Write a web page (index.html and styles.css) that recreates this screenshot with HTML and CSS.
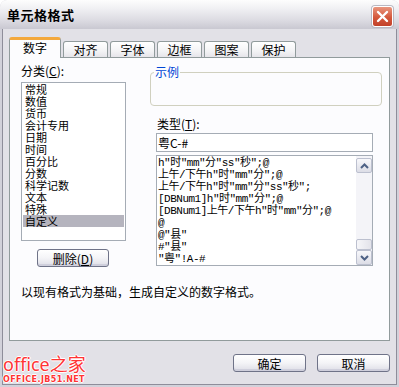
FILE: index.html
```html
<!DOCTYPE html>
<html lang="zh-CN">
<head>
  <meta charset="UTF-8" />
  <title>单元格格式</title>
  <link rel="stylesheet" href="styles.css">
</head>
<body>
  <div class="window">
    <div class="titlebar">
      <span class="title">单元格格式</span>
      <button class="close" title="关闭">
        <svg width="13" height="13" viewBox="0 0 13 13">
          <path d="M2 2 L11 11 M11 2 L2 11" stroke="#fff" stroke-width="2.4" stroke-linecap="round" fill="none"/>
        </svg>
      </button>
    </div>

    <div class="dialog">
      <div class="tabs">
        <div class="tab active">数字</div>
        <div class="tab">对齐</div>
        <div class="tab">字体</div>
        <div class="tab">边框</div>
        <div class="tab">图案</div>
        <div class="tab">保护</div>
      </div>

      <div class="panel">
        <div class="cols">
          <div class="left">
            <div class="label">分类(<u>C</u>):</div>
            <ul class="list">
              <li>常规</li>
              <li>数值</li>
              <li>货币</li>
              <li>会计专用</li>
              <li>日期</li>
              <li>时间</li>
              <li>百分比</li>
              <li>分数</li>
              <li>科学记数</li>
              <li>文本</li>
              <li>特殊</li>
              <li class="selected">自定义</li>
            </ul>
            <button class="btn del">删除(<u>D</u>)</button>
          </div>

          <div class="right">
            <fieldset class="sample">
              <legend>示例</legend>
            </fieldset>
            <div class="field">
              <div class="label">类型(<u>T</u>):</div>
              <div class="input">粤C-#</div>
              <div class="formats">
                <ul class="format-list">
                  <li>h"时"mm"分"ss"秒";@</li>
                  <li>上午/下午h"时"mm"分";@</li>
                  <li>上午/下午h"时"mm"分"ss"秒";</li>
                  <li>[DBNum1]h"时"mm"分";@</li>
                  <li>[DBNum1]上午/下午h"时"mm"分";@</li>
                  <li>@</li>
                  <li>@"县"</li>
                  <li>#"县"</li>
                  <li>"粤"!A-#</li>
                </ul>
                <div class="scrollbar">
                  <div class="arrow">
                    <svg width="9" height="6" viewBox="0 0 9 6"><path d="M1 5 L4.5 1.5 L8 5" stroke="#4d6185" stroke-width="2" fill="none"/></svg>
                  </div>
                  <div class="track"><div class="thumb"></div></div>
                  <div class="arrow">
                    <svg width="9" height="6" viewBox="0 0 9 6"><path d="M1 1 L4.5 4.5 L8 1" stroke="#4d6185" stroke-width="2" fill="none"/></svg>
                  </div>
                </div>
              </div>
            </div>
          </div>
        </div>
        <p class="hint">以现有格式为基础，生成自定义的数字格式。</p>
      </div>

      <div class="footer">
        <div class="logo">
          <div class="logo-main">office之家</div>
          <div class="logo-sub">OFFICE.JB51.NET</div>
        </div>
        <button class="btn">确定</button>
        <button class="btn">取消</button>
      </div>
    </div>
  </div>
</body>
</html>
```

FILE: styles.css
```css
body {
  margin: 0;
  font-family: "Noto Sans CJK SC", "Noto Sans", sans-serif;
  font-size: 12px;
  color: #000;
  background: #fff;
}

ul {
  list-style: none;
  margin: 0;
  padding: 0;
}

u {
  text-decoration: underline;
}

.window {
  width: 399px;
  height: 387px;
  box-sizing: border-box;
  padding: 0 2px 2px;
  background: #d2d1da;
  border-radius: 7px 7px 0 0;
  display: flex;
  flex-direction: column;
}

.titlebar {
  height: 30px;
  margin: 0 -2px;
  padding: 0 6px 0 7px;
  box-sizing: border-box;
  display: flex;
  align-items: center;
  justify-content: space-between;
  border-radius: 7px 7px 0 0;
  background: linear-gradient(#fdfdfd, #f0f0f3 30%, #dcdbe2 70%, #c9c8d1);
}

.title {
  font-weight: bold;
  font-size: 13px;
  letter-spacing: 0.5px;
}

.close {
  width: 21px;
  height: 21px;
  margin-top: 4px;
  padding: 0;
  border: 1px solid #fff;
  border-radius: 3px;
  background: linear-gradient(#e9967e, #d4583c 55%, #c2412a);
  display: flex;
  align-items: center;
  justify-content: center;
  box-shadow: 0 0 0 1px #b9b8c2;
}

.dialog {
  flex: 1;
  border: 1px solid #8e8d9a;
  border-top: 0;
  background: #e2e1e7;
  padding: 8px 6px 0;
  display: flex;
  flex-direction: column;
}

.tabs {
  height: 20px;
  display: flex;
  align-items: flex-end;
}

.tab {
  width: 45px;
  height: 16px;
  box-sizing: border-box;
  margin-left: 2px;
  border: 1px solid #919b9c;
  border-bottom: 0;
  border-radius: 3px 3px 0 0;
  background: linear-gradient(#ffffff, #f3f3f5 60%, #e6e5ea);
  text-align: center;
  line-height: 15px;
}

.tab.active {
  width: 52px;
  height: 21px;
  margin-left: 0;
  margin-bottom: -1px;
  background: #fcfcfe;
  border-top: 3px solid #f3a83c;
  position: relative;
  z-index: 2;
  line-height: 16px;
}

.panel {
  height: 284px;
  box-sizing: border-box;
  border: 1px solid #919b9c;
  background: #fcfcfe;
  padding: 6px 0 0 11px;
}

.cols {
  display: flex;
}

.left {
  width: 105px;
  display: flex;
  flex-direction: column;
  align-items: flex-start;
}

.label {
  line-height: 14px;
}

.list {
  width: 105px;
  height: 159px;
  box-sizing: border-box;
  margin-top: 4px;
  border: 1px solid #a5acb5;
  background: #fff;
  padding: 0 1px;
}

.list li {
  font-size: 11px;
  line-height: 12px;
  padding-left: 2px;
}

.list li.selected {
  background: #b5b4be;
}

.btn {
  width: 73px;
  height: 18px;
  padding: 0;
  border: 1px solid #6f7388;
  border-radius: 3px;
  background: linear-gradient(#ffffff, #f4f4f7 50%, #dddde6);
  box-shadow: inset 0 -2px 0 #cfcfdc;
  font-family: inherit;
  font-size: 12px;
  line-height: 15px;
  color: #000;
}

.del {
  width: 72px;
  margin: 8px 0 0 16px;
}

.right {
  width: 232px;
  margin-left: 24px;
}

.sample {
  height: 41px;
  box-sizing: border-box;
  margin: 1px 0 0;
  padding: 0;
  border: 1px solid #d0d0bf;
  border-radius: 4px;
}

.sample legend {
  margin-left: 3px;
  padding: 0 1px;
  line-height: 14px;
  color: #0046d5;
}

.field {
  margin: 11px 0 0 6px;
}

.field .label {
  padding-left: 1px;
}

.input {
  width: 217px;
  height: 19px;
  box-sizing: border-box;
  margin-top: 2px;
  border: 1px solid #a5acb5;
  background: #fff;
  padding-left: 1px;
  line-height: 17px;
}

.formats {
  width: 217px;
  height: 111px;
  box-sizing: border-box;
  margin-top: 3px;
  border: 1px solid #a5acb5;
  background: #fff;
  display: flex;
}

.format-list {
  flex: 1;
  overflow: hidden;
  padding: 1px 0 0 1px;
  white-space: nowrap;
  font-family: "Liberation Mono", "Noto Sans CJK SC", monospace;
  font-size: 11px;
  letter-spacing: -0.5px;
}

.format-list li {
  line-height: 12px;
}

.scrollbar {
  width: 16px;
  padding: 2px 0 0;
  background: #f4f4f8;
  display: flex;
  flex-direction: column;
}

.arrow {
  height: 15px;
  box-sizing: border-box;
  border: 1px solid #bcc0cf;
  border-radius: 2px;
  background: linear-gradient(#f8f8fb, #dcdde6);
  display: flex;
  align-items: center;
  justify-content: center;
}

.track {
  flex: 1;
  display: flex;
  flex-direction: column;
  justify-content: flex-end;
}

.thumb {
  height: 9px;
  border: 1px solid #bcc0cf;
  border-radius: 2px;
  background: linear-gradient(90deg, #f6f6f9, #e3e3ea);
}

.hint {
  margin: 18px 0 0;
  line-height: 14px;
}

.footer {
  margin-top: 13px;
  display: flex;
  align-items: flex-start;
  gap: 11px;
}

.logo {
  margin: 1px auto 0 -6px;
  color: #ff3434;
  text-shadow: 1px 0 #fff, -1px 0 #fff, 0 1px #fff, 0 -1px #fff;
}

.logo-main {
  font-family: "Noto Sans", "Noto Sans CJK SC", sans-serif;
  font-size: 18px;
  line-height: 18px;
}

.logo-sub {
  margin-top: 3px;
  font-family: "DejaVu Sans", sans-serif;
  font-weight: bold;
  font-size: 8px;
  line-height: 8px;
  letter-spacing: 0.4px;
}
```
